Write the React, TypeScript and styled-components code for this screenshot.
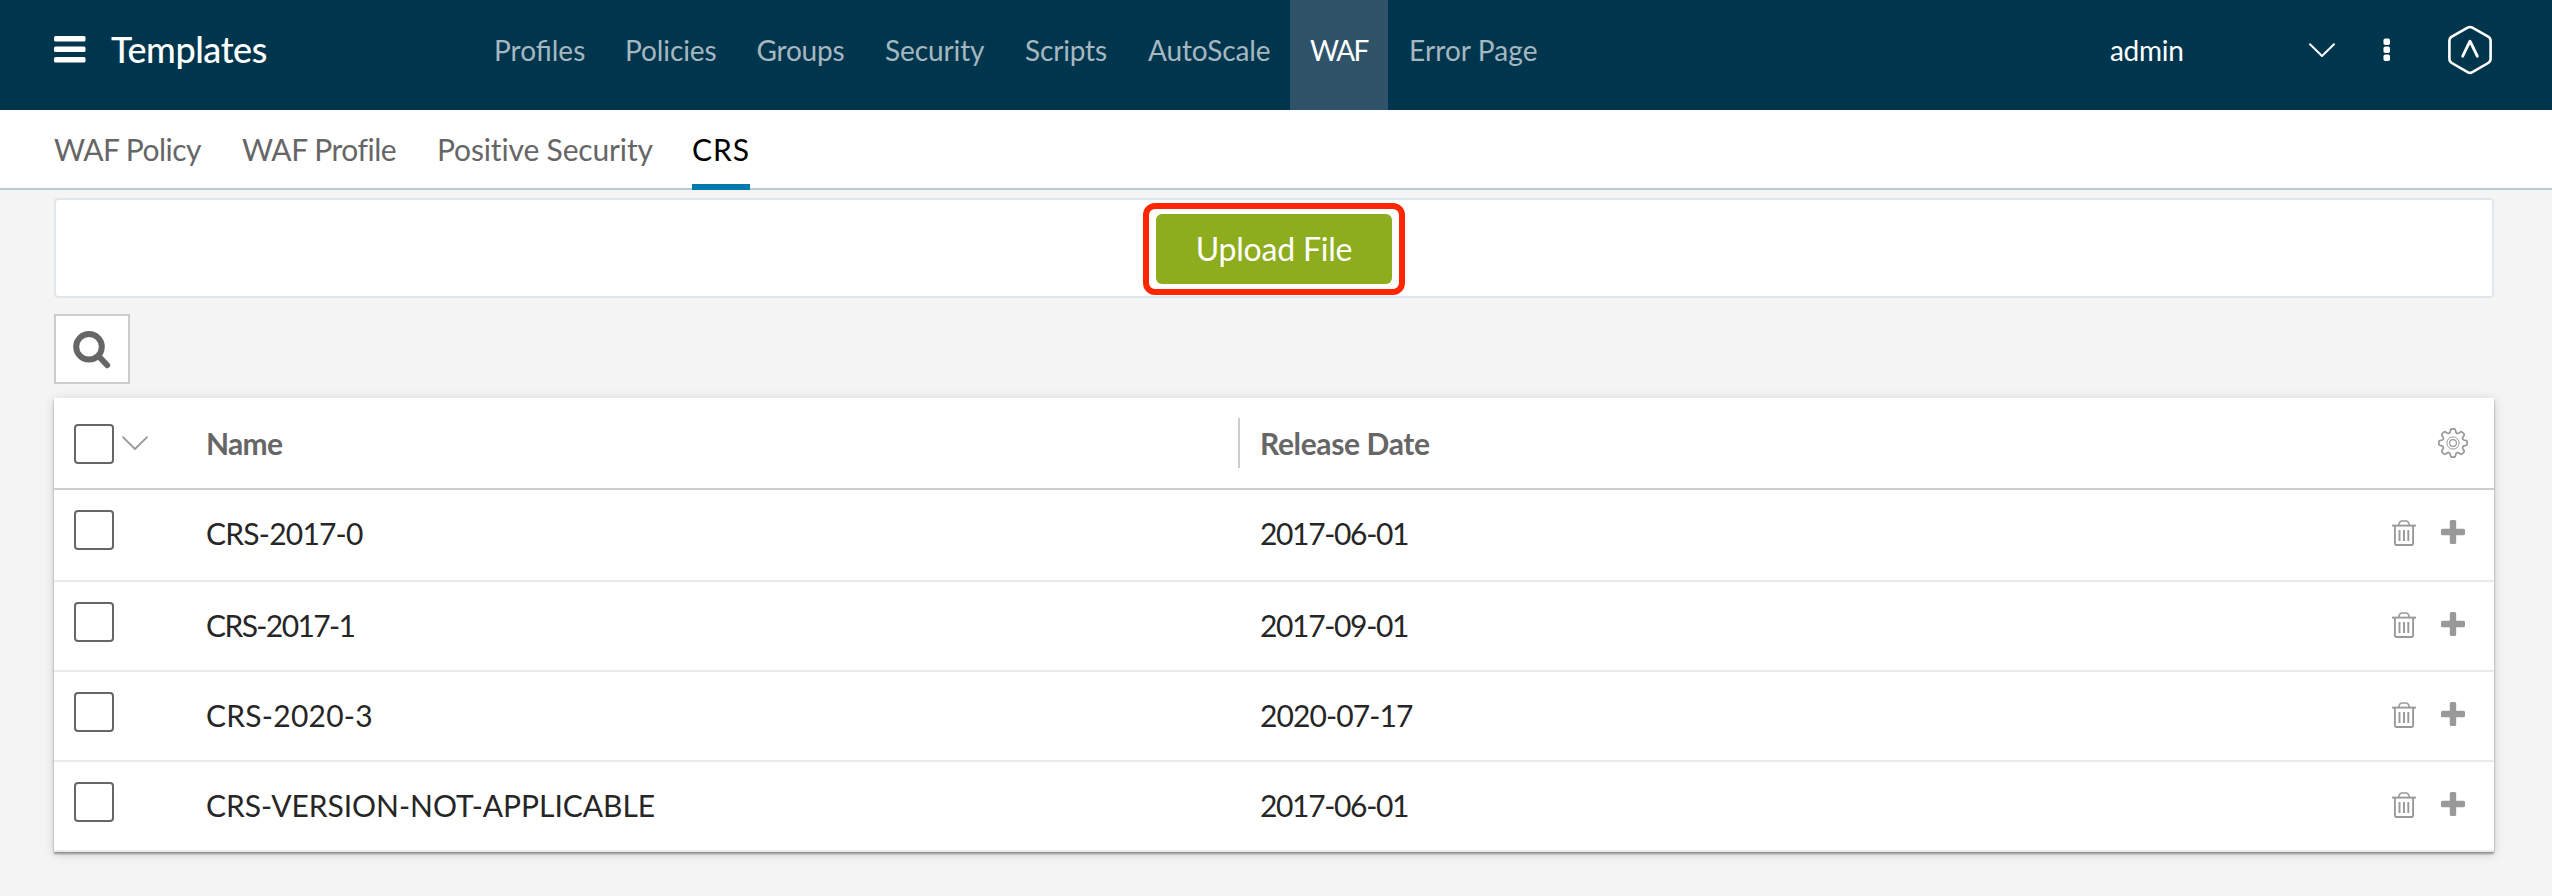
import React from "react";
import styled, { createGlobalStyle } from "styled-components";

const GlobalStyle = createGlobalStyle`
  * { box-sizing: border-box; }
  body {
    margin: 0;
    min-height: 896px;
    background: #f4f4f4;
    font-family: Lato, "Liberation Sans", sans-serif;
    color: #262626;
  }
  svg { display: block; flex: none; }
  button { font-family: inherit; margin: 0; padding: 0; border: 0; background: none; }
`;

const Label = styled.span<{ $tracking?: number }>`
  letter-spacing: ${(p) => p.$tracking ?? 0}px;
  white-space: nowrap;
`;

const Header = styled.header`
  display: flex;
  height: 110px;
  background: #00364d;
  color: #fff;
`;

const Brand = styled.div`
  display: flex;
  align-items: center;
  gap: 25px;
  width: 473px;
  padding: 0 0 12px 54px;
  font-size: 36px;
  font-weight: 500;
`;

const Nav = styled.nav`
  display: flex;
  flex: 1;
`;

const NavItem = styled.a<{ $width: number; $active?: boolean }>`
  display: flex;
  align-items: center;
  width: ${(p) => p.$width}px;
  padding: 0 0 10px ${(p) => (p.$active ? 20 : 21)}px;
  font-size: 28px;
  color: ${(p) => (p.$active ? "#fff" : "#a6b7c0")};
  background: ${(p) => (p.$active ? "#2f5368" : "transparent")};
`;

const Account = styled.div`
  display: flex;
  align-items: center;
  padding: 0 60px 11px 0;
  font-size: 28px;
`;

const UserMenu = styled.div`
  display: flex;
  align-items: center;
  justify-content: space-between;
  width: 225px;
  margin-right: 48px;
`;

const More = styled.div`
  margin-right: 57px;
`;

const TabBar = styled.nav`
  display: flex;
  height: 80px;
  padding-left: 54px;
  background: #fff;
  border-bottom: 2px solid #b9cbcb;
`;

const Tab = styled.a<{ $width: number; $active?: boolean }>`
  display: flex;
  align-items: center;
  height: 80px;
  width: ${(p) => p.$width}px;
  padding: 4px 0 ${(p) => (p.$active ? 0 : 6)}px;
  border-bottom: ${(p) => (p.$active ? "6px solid #0079ad" : "0")};
  font-size: 30px;
  color: ${(p) => (p.$active ? "#000" : "#666")};
`;

const Content = styled.main`
  display: flex;
  flex-direction: column;
  align-items: flex-start;
  padding: 8px 58px 0 54px;
`;

const UploadPanel = styled.section`
  display: flex;
  align-items: center;
  justify-content: center;
  align-self: stretch;
  height: 100px;
  background: #fff;
  border: 2px solid #e1e6ea;
  border-radius: 4px;
`;

const Highlight = styled.div`
  padding: 5px 7px;
  margin-top: 2px;
  border: 6px solid #ff2600;
  border-radius: 12px;
`;

const UploadButton = styled.button`
  display: flex;
  align-items: center;
  justify-content: center;
  width: 236px;
  height: 70px;
  padding-bottom: 2px;
  border-radius: 6px;
  background: #8dad1e;
  color: #fff;
  font-size: 32px;
`;

const SearchButton = styled.button`
  display: flex;
  align-items: center;
  justify-content: center;
  width: 76px;
  height: 70px;
  margin: 16px 0 14px;
  padding-top: 1px;
  background: #fff;
  border: 2px solid #ccc;
`;

const Table = styled.section`
  align-self: stretch;
  background: #fff;
  box-shadow: 0 2px 2px rgba(0, 0, 0, 0.36), 0 2px 10px rgba(0, 0, 0, 0.16);
`;

const HeadRow = styled.div`
  display: flex;
  align-items: center;
  height: 92px;
  padding: 0 26px 0 20px;
  border-bottom: 2px solid #ccc;
  font-size: 30px;
  font-weight: 700;
  color: #666;
`;

const Row = styled.div<{ $height: number }>`
  display: flex;
  align-items: center;
  height: ${(p) => p.$height}px;
  padding: 0 29px ${(p) => p.$height - 88}px 20px;
  border-bottom: 2px solid #eaeaea;
  font-size: 30px;
`;

const SelectCell = styled.div`
  display: flex;
  align-items: center;
  gap: 8px;
  width: 132px;
`;

const CheckBox = styled.span<{ $offset: number }>`
  width: 40px;
  height: 40px;
  margin-top: ${(p) => p.$offset}px;
  border: 2px solid #666;
  border-radius: 4px;
  background: #fff;
`;

const NameCell = styled.div`
  width: 1032px;
`;

const Divider = styled.div`
  width: 2px;
  height: 50px;
  background: #ccc;
`;

const DateCell = styled.div`
  flex: 1;
  padding-left: 22px;
`;

const DateHead = styled(DateCell)`
  padding-left: 20px;
`;

const Actions = styled.div`
  display: flex;
  align-items: center;
  gap: 25px;
`;

const Lift = styled.div`
  margin-top: -2px;
`;

const Chevron = ({ color, stroke }: { color: string; stroke: number }) => (
  <svg width={26} height={14} viewBox="0 0 26 14" fill="none" stroke={color} strokeWidth={stroke} strokeLinecap="round" strokeLinejoin="round">
    <path d="M1 1.2 13 13 25 1.2" />
  </svg>
);

const MenuIcon = () => (
  <svg width={32} height={28} viewBox="0 0 32 28" fill="#fff">
    <rect y={1} width={31.5} height={5.5} rx={1.5} />
    <rect y={11.5} width={31.5} height={5.5} rx={1.5} />
    <rect y={22} width={31.5} height={5.5} rx={1.5} />
  </svg>
);

const DotsIcon = () => (
  <svg width={8} height={24} viewBox="0 0 8 24" fill="#fff">
    <rect x={0.5} y={0.5} width={6.5} height={6.5} rx={1.8} />
    <rect x={0.5} y={8.5} width={6.5} height={6.5} rx={1.8} />
    <rect x={0.5} y={16.5} width={6.5} height={6.5} rx={1.8} />
  </svg>
);

const LogoIcon = () => (
  <svg width={44} height={50} viewBox="0 0 44 50" fill="none" stroke="#fff" strokeLinecap="round" strokeLinejoin="round">
    <path strokeWidth={2.6} d="M19.6 2.7Q22 1.4 24.4 2.7L40.2 11.7Q42.6 13.1 42.6 16V33.8Q42.6 36.6 40.2 38L24.4 47.2Q22 48.6 19.6 47.2L3.8 38Q1.4 36.6 1.4 33.8V16Q1.4 13.1 3.8 11.7Z" />
    <path strokeWidth={2.9} d="M14.7 31.2 22 16.2 29.3 31.2" />
  </svg>
);

const SearchIcon = () => (
  <svg width={38} height={38} viewBox="0 0 38 38" fill="none" stroke="#666" strokeLinecap="round">
    <circle cx={16} cy={15.8} r={12.8} strokeWidth={6} />
    <path strokeWidth={6} d="M26.4 26 34.2 34.2" />
  </svg>
);

// One tooth (half the valley on each side), repeated every 45 degrees round the centre.
const gearOutline = (() => {
  const parts: string[] = [];
  for (let i = 0; i < 8; i++) {
    const a = (i * Math.PI) / 4;
    const at = (x: number, y: number) =>
      `${(15 + x * Math.cos(a) + y * Math.sin(a)).toFixed(2)} ${(15 + x * Math.sin(a) - y * Math.cos(a)).toFixed(2)}`;
    parts.push(
      `${i ? "L" : "M"}${at(-3.5, 10)}Q${at(-2.7, 10.7)} ${at(-2.6, 12.4)}Q${at(-2.5, 14.2)} ${at(-1, 14.2)}L${at(1, 14.2)}Q${at(2.5, 14.2)} ${at(2.6, 12.4)}Q${at(2.7, 10.7)} ${at(3.5, 10)}Q${at(4.1, 9.5)} ${at(4.6, 9.7)}`
    );
  }
  return parts.join("") + "Z";
})();

const GearIcon = () => (
  <svg width={30} height={30} viewBox="0 0 30 30" fill="none" stroke="#999">
    <path strokeWidth={1.7} strokeLinejoin="round" d={gearOutline} />
    <circle cx={15} cy={15} r={6.1} strokeWidth={1} />
    <circle cx={15} cy={15} r={3.4} strokeWidth={1.2} />
  </svg>
);

const TrashIcon = () => (
  <svg width={24} height={26} viewBox="0 0 24 26" fill="none" stroke="#999">
    <path strokeWidth={1.9} d="M0 5.6H24" />
    <path strokeWidth={1.6} d="M6.7 5.3 7.6 2.6Q8.2 1 9.8 1H14.2Q15.8 1 16.4 2.6L17.3 5.3" />
    <path strokeWidth={1.9} d="M2.9 5.6V23.2Q2.9 25 4.7 25H19.3Q21.1 25 21.1 23.2V5.6" />
    <path strokeWidth={1.9} d="M7.5 10V21M12 10V21M16.3 10V21" />
  </svg>
);

const PlusIcon = () => (
  <svg width={24} height={24} viewBox="0 0 24 24" fill="#999">
    <rect x={8.8} width={6.4} height={24} rx={1.5} />
    <rect y={8.8} width={24} height={6.4} rx={1.5} />
  </svg>
);

const navItems = [
  { text: "Profiles", width: 131, tracking: 0 },
  { text: "Policies", width: 131.5, tracking: -0.1 },
  { text: "Groups", width: 128.5, tracking: -0.2 },
  { text: "Security", width: 140, tracking: -0.1 },
  { text: "Scripts", width: 123, tracking: -0.16 },
  { text: "AutoScale", width: 163, tracking: -0.12 },
  { text: "WAF", width: 98, tracking: -1.6, active: true },
  { text: "Error Page", width: 170, tracking: 0.1 },
];

const tabs = [
  { text: "WAF Policy", width: 188, tracking: -0.55 },
  { text: "WAF Profile", width: 195, tracking: -0.47 },
  { text: "Positive Security", width: 255, tracking: -0.15 },
  { text: "CRS", width: 58, tracking: 1, active: true },
];

const rows = [
  { name: "CRS-2017-0", nameTracking: -0.78, date: "2017-06-01", dateTracking: -1.34, height: 92 },
  { name: "CRS-2017-1", nameTracking: -1.6, date: "2017-09-01", dateTracking: -1.34, height: 90 },
  { name: "CRS-2020-3", nameTracking: 0.25, date: "2020-07-17", dateTracking: -0.9, height: 90 },
  { name: "CRS-VERSION-NOT-APPLICABLE", nameTracking: -0.04, date: "2017-06-01", dateTracking: -1.34, height: 90 },
];

export default function App() {
  return (
    <>
      <GlobalStyle />
      <Header>
        <Brand>
          <MenuIcon />
          <Label $tracking={-0.46}>Templates</Label>
        </Brand>
        <Nav>
          {navItems.map((n) => (
            <NavItem key={n.text} $width={n.width} $active={n.active}>
              <Label $tracking={n.tracking}>{n.text}</Label>
            </NavItem>
          ))}
        </Nav>
        <Account>
          <UserMenu>
            <Label $tracking={-0.3}>admin</Label>
            <Chevron color="#fff" stroke={2} />
          </UserMenu>
          <More>
            <DotsIcon />
          </More>
          <LogoIcon />
        </Account>
      </Header>
      <TabBar>
        {tabs.map((t) => (
          <Tab key={t.text} $width={t.width} $active={t.active}>
            <Label $tracking={t.tracking}>{t.text}</Label>
          </Tab>
        ))}
      </TabBar>
      <Content>
        <UploadPanel>
          <Highlight>
            <UploadButton>
              <Label $tracking={-0.2}>Upload File</Label>
            </UploadButton>
          </Highlight>
        </UploadPanel>
        <SearchButton aria-label="Search">
          <SearchIcon />
        </SearchButton>
        <Table>
          <HeadRow>
            <SelectCell>
              <CheckBox $offset={2} />
              <Chevron color="#999" stroke={1.8} />
            </SelectCell>
            <NameCell>
              <Label $tracking={-0.69}>Name</Label>
            </NameCell>
            <Divider />
            <DateHead>
              <Label $tracking={-0.36}>Release Date</Label>
            </DateHead>
            <GearIcon />
          </HeadRow>
          {rows.map((r) => (
            <Row key={r.name} $height={r.height}>
              <SelectCell>
                <CheckBox $offset={-6} />
              </SelectCell>
              <NameCell>
                <Label $tracking={r.nameTracking}>{r.name}</Label>
              </NameCell>
              <DateCell>
                <Label $tracking={r.dateTracking}>{r.date}</Label>
              </DateCell>
              <Actions>
                <TrashIcon />
                <Lift>
                  <PlusIcon />
                </Lift>
              </Actions>
            </Row>
          ))}
        </Table>
      </Content>
    </>
  );
}
